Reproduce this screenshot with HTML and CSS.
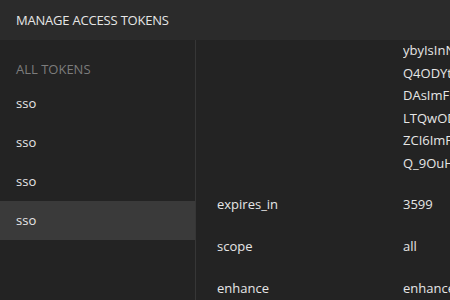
FILE: index.html
```html
<!DOCTYPE html>
<html lang="en">

<head>
    <meta charset="UTF-8">
    <meta name="viewport" content="width=device-width, initial-scale=1.0">
    <title>Manage Access Tokens</title>
    <link rel="stylesheet" href="styles.css">
</head>

<body>
    <div class="header">
        <div class="title">MANAGE ACCESS TOKENS</div>
    </div>

    <div class="content">
        <div class="sidebar">
            <div class="sidebar-label">ALL TOKENS</div>
            <div class="token-item">sso</div>
            <div class="token-item">sso</div>
            <div class="token-item">sso</div>
            <div class="token-item selected">sso</div>
        </div>

        <div class="details">
            <div class="detail-row first">
                <div class="detail-key"></div>
                <div class="detail-value token-lines">
                    <div>ybyIsInNjb3BlIjoiYWxsIiwiZXhw</div>
                    <div>Q4ODYtNGY5ZS1hM2Q1LTQ4</div>
                    <div>DAsImF1dGhvcml0aWVzIjpb</div>
                    <div>LTQwODQtYjA2OC1mZGQ5</div>
                    <div>ZCI6ImFkbWluIiwianRp</div>
                    <div>Q_9OuHx2bZkE1vM4</div>
                </div>
            </div>
            <div class="detail-row">
                <div class="detail-key">expires_in</div>
                <div class="detail-value">3599</div>
            </div>
            <div class="detail-row">
                <div class="detail-key">scope</div>
                <div class="detail-value">all</div>
            </div>
            <div class="detail-row">
                <div class="detail-key">enhance</div>
                <div class="detail-value">enhance</div>
            </div>
        </div>
    </div>
</body>

</html>
```

FILE: styles.css
```css
body {
    font-family: "Open Sans", "Segoe UI", sans-serif;
    font-size: 13px;
    margin: 0;
    padding: 0;
    background-color: #232323;
    color: #e6e6e6;
    height: 300px;
    overflow: hidden;
}

.header {
    height: 40px;
    display: flex;
    align-items: center;
    padding: 0 16px;
    background-color: #2b2b2b;
}

.title {
    font-size: 13px;
    letter-spacing: -0.2px;
}

.content {
    display: flex;
    height: 260px;
}

.sidebar {
    width: 195px;
    flex-shrink: 0;
    border-right: 1px solid #363636;
    padding-top: 12px;
}

.sidebar-label {
    height: 34px;
    line-height: 34px;
    padding-left: 16px;
    color: #7c7c7c;
    margin-bottom: -2px;
}

.token-item {
    height: 39px;
    line-height: 39px;
    padding-left: 16px;
}

.token-item.selected {
    background-color: #3a3a3a;
}

.details {
    flex: 1;
    overflow: hidden;
}

.detail-row {
    display: flex;
    padding: 10px 0;
    line-height: 22px;
}

.detail-row.first {
    padding-top: 0;
    padding-bottom: 8px;
    margin-top: -1px;
}

.detail-key {
    width: 186px;
    flex-shrink: 0;
    padding-left: 21px;
}

.detail-value {
    white-space: nowrap;
    overflow: hidden;
}

.token-lines div {
    height: 22.6px;
}
```
